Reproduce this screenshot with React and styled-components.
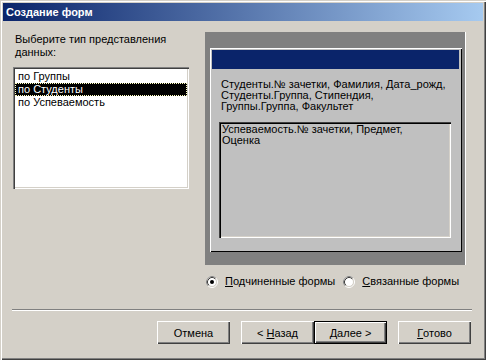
import React from 'react';
import styled, { createGlobalStyle } from 'styled-components';

const GlobalStyle = createGlobalStyle`
  html, body {
    margin: 0;
    padding: 0;
    background: #d4d0c8;
  }
  * {
    box-sizing: border-box;
  }
`;

const Window = styled.div`
  width: 486px;
  height: 360px;
  padding: 3px;
  display: flex;
  flex-direction: column;
  background: #d4d0c8;
  font-family: 'Liberation Sans', Arial, sans-serif;
  font-size: 11px;
  color: #000;
  box-shadow: inset 1px 1px 0 #d4d0c8, inset 2px 2px 0 #fff,
    inset -1px -1px 0 #404040, inset -2px -2px 0 #808080;
`;

const TitleBar = styled.div`
  height: 18px;
  display: flex;
  align-items: center;
  padding-left: 3px;
  background: linear-gradient(to right, #0a246a, #a6caf0);
  color: #fff;
  font-weight: bold;
  font-size: 11px;
`;

const Body = styled.div`
  flex: 1;
  display: flex;
  flex-direction: column;
  padding: 11px 10px 0 10px;
`;

const MainRow = styled.div`
  display: flex;
  gap: 16px;
`;

const LeftCol = styled.div`
  width: 176px;
  display: flex;
  flex-direction: column;
`;

const Label = styled.div`
  padding: 1px 0 0 2px;
  line-height: 13px;
`;

const ListBox = styled.div`
  margin-top: 8px;
  height: 122px;
  background: #fff;
  padding: 3px 2px 2px 2px;
  box-shadow: inset 1px 1px 0 #808080, inset 2px 2px 0 #404040,
    inset -1px -1px 0 #fff, inset -2px -2px 0 #d4d0c8;
`;

const ListItem = styled.div`
  height: 13px;
  line-height: 13px;
  padding-left: 3px;
  background: ${({ $selected }) => ($selected ? '#000' : 'transparent')};
  color: ${({ $selected }) => ($selected ? '#fff' : '#000')};
  outline: ${({ $selected }) => ($selected ? '1px dotted #ffffc0' : 'none')};
  outline-offset: -1px;
`;

const RightCol = styled.div`
  display: flex;
  flex-direction: column;
`;

const Preview = styled.div`
  width: 261px;
  height: 233px;
  background: #808080;
  border-right: 1px solid #fff;
  padding: 16px 3px 13px 5px;
`;

const MockWindow = styled.div`
  height: 100%;
  background: #c0c0c0;
  padding: 2px 3px 2px 2px;
  display: flex;
  flex-direction: column;
  box-shadow: inset 1px 1px 0 #fff, inset -1px -1px 0 #000;
`;

const MockTitle = styled.div`
  height: 19px;
  background: #0a246a;
`;

const MockText = styled.div`
  margin: 10px 0 0 9px;
  line-height: 11px;
  font-size: 11px;
`;

const SubForm = styled.div`
  margin: 10px 8px 0 7px;
  height: 116px;
  padding: 2px 2px 2px 3px;
  line-height: 11px;
  box-shadow: inset 1px 1px 0 #404040, inset 2px 2px 0 #000,
    inset -1px -1px 0 #fff, inset -2px -2px 0 #d4d0c8;
`;

const RadioRow = styled.div`
  margin-top: 10px;
  padding-left: 1px;
  display: flex;
  align-items: center;
  gap: 8px;
  height: 13px;
`;

const RadioOption = styled.label`
  display: flex;
  align-items: center;
  gap: 7px;
  line-height: 13px;
`;

const Key = styled.span`
  text-decoration: underline;
`;

const Separator = styled.div`
  margin: 21px 1px 0 -1px;
  height: 2px;
  border-top: 1px solid #808080;
  border-bottom: 1px solid #fff;
`;

const ButtonRow = styled.div`
  margin-top: 10px;
  padding-right: 2px;
  display: flex;
  justify-content: flex-end;
`;

const Button = styled.div`
  width: 73px;
  height: 23px;
  margin-left: ${({ $gap }) => $gap}px;
  display: flex;
  align-items: center;
  justify-content: center;
  background: #d4d0c8;
  box-shadow: ${({ $default }) =>
    $default
      ? 'inset 1px 1px 0 #000, inset -1px -1px 0 #000, inset 2px 2px 0 #fff, inset -2px -2px 0 #404040, inset -3px -3px 0 #808080'
      : 'inset 1px 1px 0 #fff, inset -1px -1px 0 #404040, inset -2px -2px 0 #808080'};
`;

const Radio = ({ checked }) => (
  <svg width="12" height="12" viewBox="0 0 12 12">
    <circle cx="6" cy="6" r="5.5" fill="none" stroke="#fff" />
    <path d="M2.11 9.89 A5.5 5.5 0 0 1 9.89 2.11" fill="none" stroke="#808080" />
    <circle cx="6" cy="6" r="4.5" fill="#fff" stroke="#d4d0c8" />
    <path d="M2.82 9.18 A4.5 4.5 0 0 1 9.18 2.82" fill="none" stroke="#404040" />
    {checked && <circle cx="6" cy="6" r="2" fill="#000" />}
  </svg>
);

const items = ['по Группы', 'по Студенты', 'по Успеваемость'];

const App = () => {
  return (
    <>
      <GlobalStyle />
      <Window>
        <TitleBar>Создание форм</TitleBar>
        <Body>
          <MainRow>
            <LeftCol>
              <Label>
                Выберите тип представления
                <br />
                данных:
              </Label>
              <ListBox>
                {items.map((item, i) => (
                  <ListItem key={item} $selected={i === 1}>
                    {item}
                  </ListItem>
                ))}
              </ListBox>
            </LeftCol>
            <RightCol>
              <Preview>
                <MockWindow>
                  <MockTitle />
                  <MockText>
                    Студенты.№ зачетки, Фамилия, Дата_рожд,
                    <br />
                    Студенты.Группа, Стипендия,
                    <br />
                    Группы.Группа, Факультет
                  </MockText>
                  <SubForm>
                    Успеваемость.№ зачетки, Предмет,
                    <br />
                    Оценка
                  </SubForm>
                </MockWindow>
              </Preview>
              <RadioRow>
                <RadioOption>
                  <Radio checked />
                  <span>
                    <Key>П</Key>одчиненные формы
                  </span>
                </RadioOption>
                <RadioOption>
                  <Radio />
                  <span>
                    <Key>С</Key>вязанные формы
                  </span>
                </RadioOption>
              </RadioRow>
            </RightCol>
          </MainRow>
          <Separator />
          <ButtonRow>
            <Button $gap={0}>Отмена</Button>
            <Button $gap={11}>
              &lt;&nbsp;<Key>Н</Key>азад
            </Button>
            <Button $gap={0} $default>
              <Key>Д</Key>алее&nbsp;&gt;
            </Button>
            <Button $gap={11}>
              <Key>Г</Key>отово
            </Button>
          </ButtonRow>
        </Body>
      </Window>
    </>
  );
};

export default App;
